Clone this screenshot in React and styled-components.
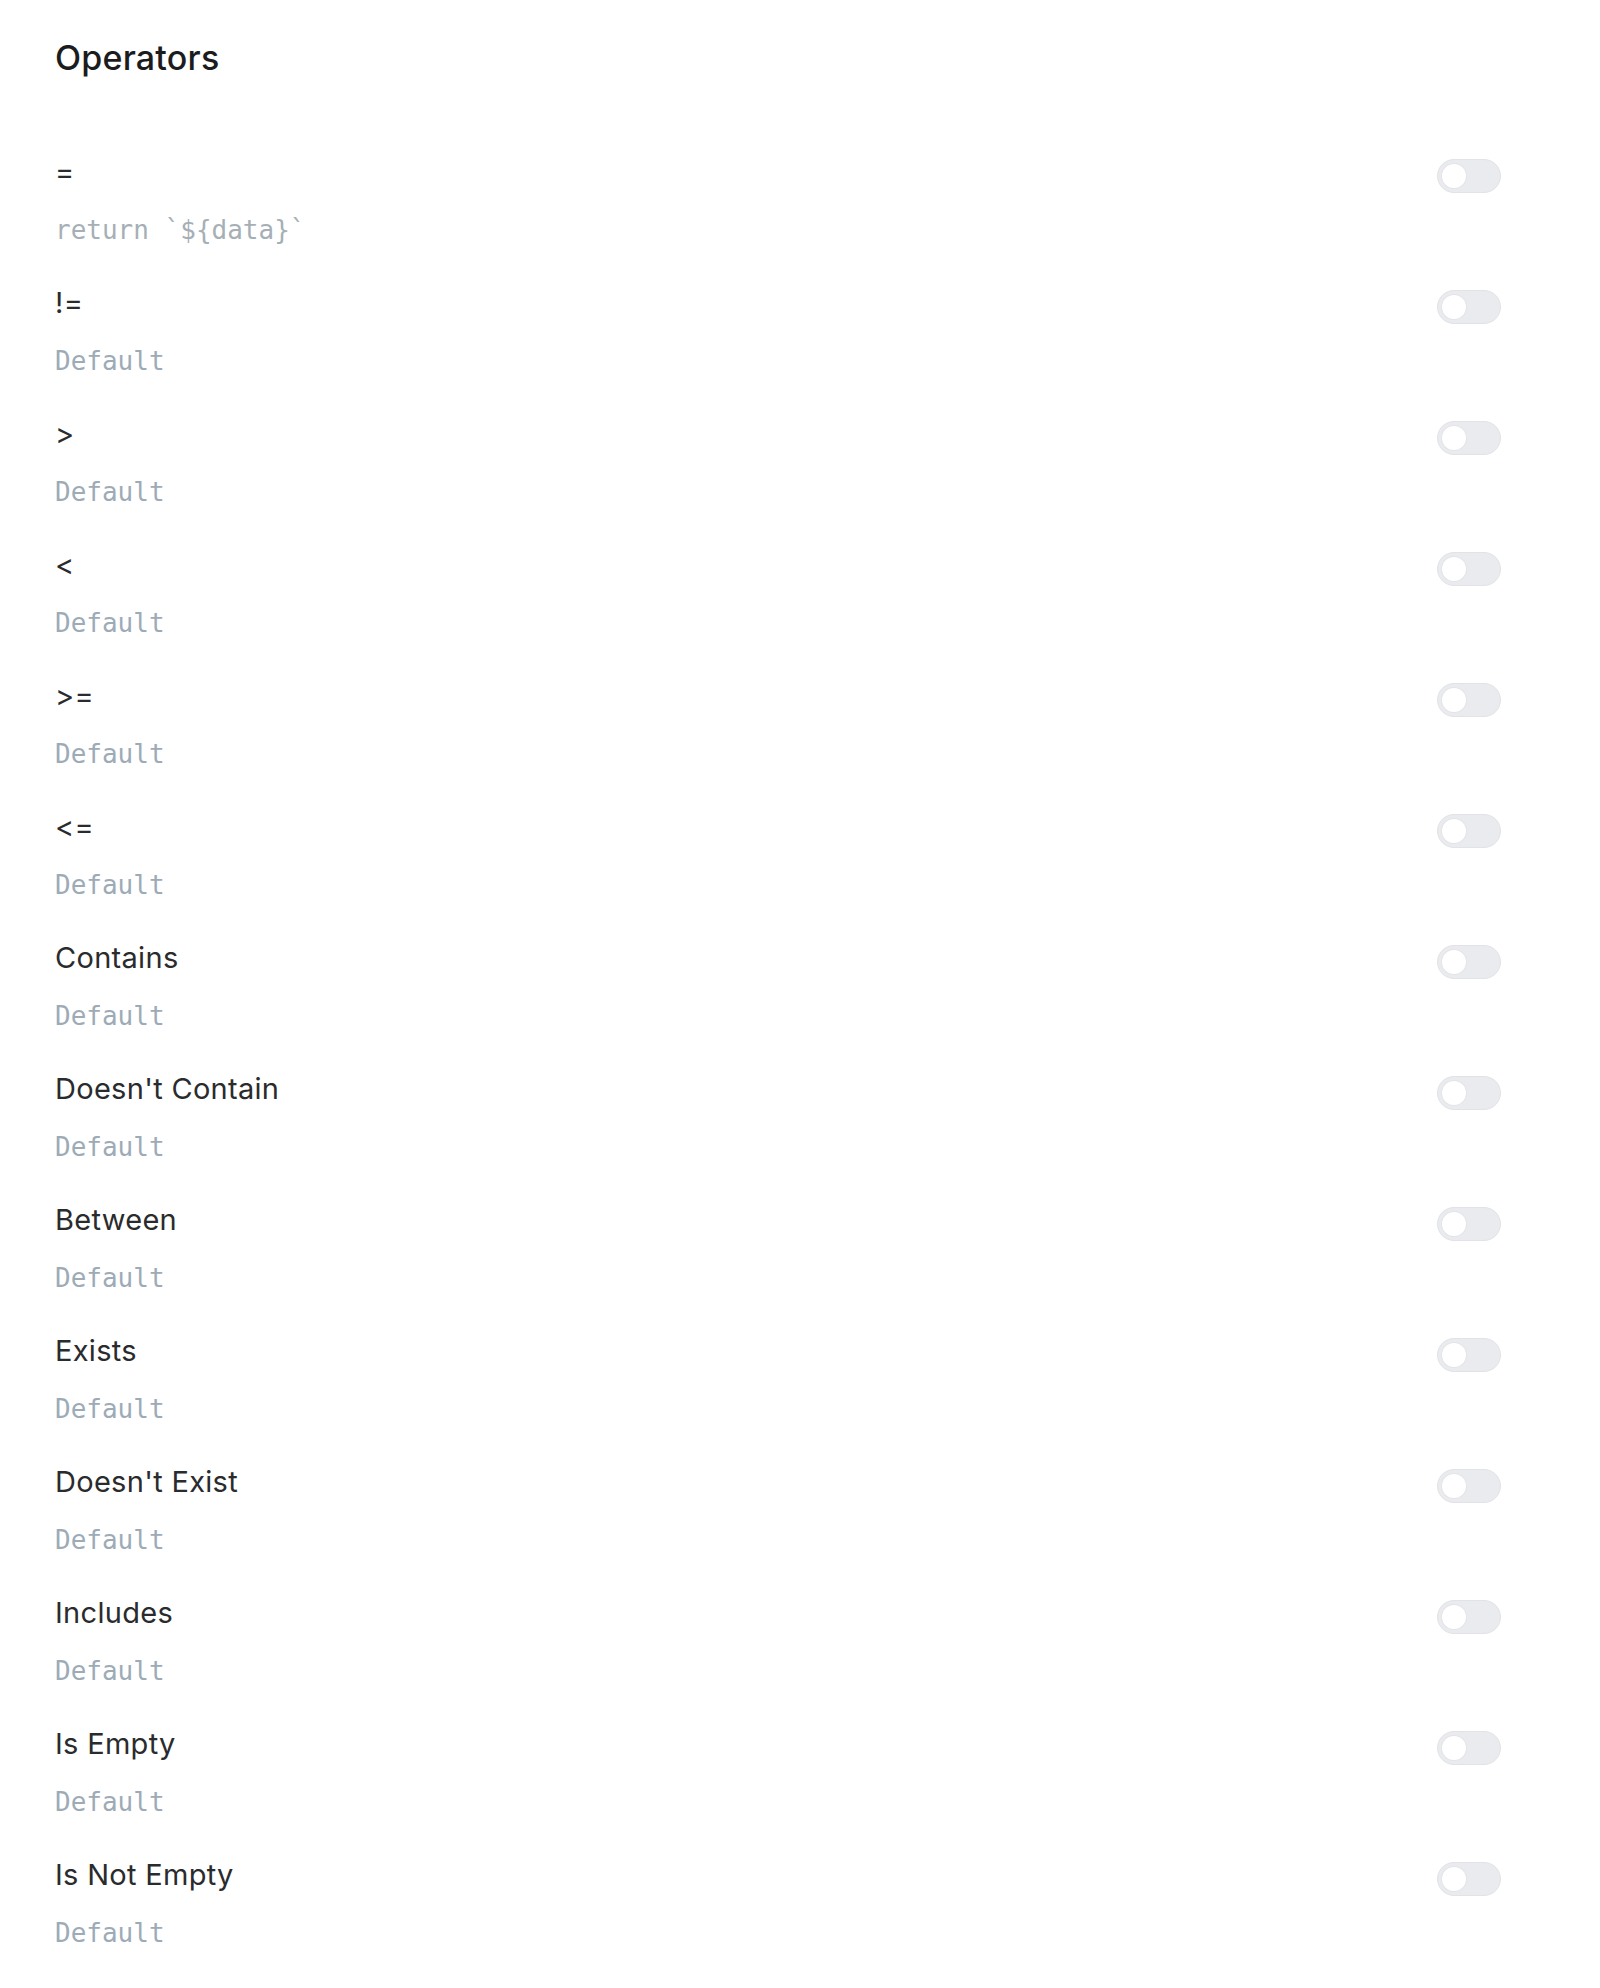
import React from "react"
import styled, { createGlobalStyle } from "styled-components"

const GlobalStyle = createGlobalStyle`
  body {
    margin: 0;
    background: #ffffff;
    font-family: Inter, "Noto Sans", sans-serif;
    -webkit-font-smoothing: antialiased;
  }
`

const Panel = styled.div`
  padding: 36px 99px 40px 55px;
`

const Title = styled.h2`
  margin: 0 0 56px;
  font-size: 34px;
  line-height: 44px;
  font-weight: 500;
  letter-spacing: 0.2px;
  color: #1b1c1e;
`

const List = styled.div`
  display: flex;
  flex-direction: column;
`

const Row = styled.div`
  display: flex;
  align-items: flex-start;
  justify-content: space-between;
  height: 131px;
  padding-top: 16px;
  box-sizing: border-box;
`

const Info = styled.div`
  display: flex;
  flex-direction: column;
  gap: 18px;
`

const Label = styled.div`
  font-size: 29px;
  line-height: 40px;
  letter-spacing: 0.3px;
  color: #2a2b2d;
`

const Code = styled.code`
  font-family: "DejaVu Sans Mono", "Liberation Mono", monospace;
  font-size: 26px;
  line-height: 40px;
  color: ${(p) => (p.$custom ? "#a6afb6" : "#9dabb7")};
  white-space: pre;
`

const Switch = styled.button`
  position: relative;
  flex: none;
  width: 64px;
  height: 34px;
  margin-top: 7px;
  padding: 0;
  border-radius: 17px;
  border: 1px solid #e1e3e6;
  background: #e9ebee;
  cursor: pointer;

  &::after {
    content: "";
    position: absolute;
    top: 4px;
    left: ${(p) => (p.$on ? "34px" : "4px")};
    width: 24px;
    height: 24px;
    border-radius: 50%;
    background: #ffffff;
    box-shadow: 0 0 0 1px #e3e5e8;
  }
`

const operators = [
  { label: "=", code: "return `${data}`" },
  { label: "!=" },
  { label: ">" },
  { label: "<" },
  { label: ">=" },
  { label: "<=" },
  { label: "Contains" },
  { label: "Doesn't Contain" },
  { label: "Between" },
  { label: "Exists" },
  { label: "Doesn't Exist" },
  { label: "Includes" },
  { label: "Is Empty" },
  { label: "Is Not Empty" },
]

export default function App() {
  return (
    <>
      <GlobalStyle />
      <Panel>
        <Title>Operators</Title>
        <List>
          {operators.map((op) => (
            <Row key={op.label}>
              <Info>
                <Label>{op.label}</Label>
                <Code $custom={!!op.code}>{op.code || "Default"}</Code>
              </Info>
              <Switch type="button" aria-label={op.label} />
            </Row>
          ))}
        </List>
      </Panel>
    </>
  )
}
